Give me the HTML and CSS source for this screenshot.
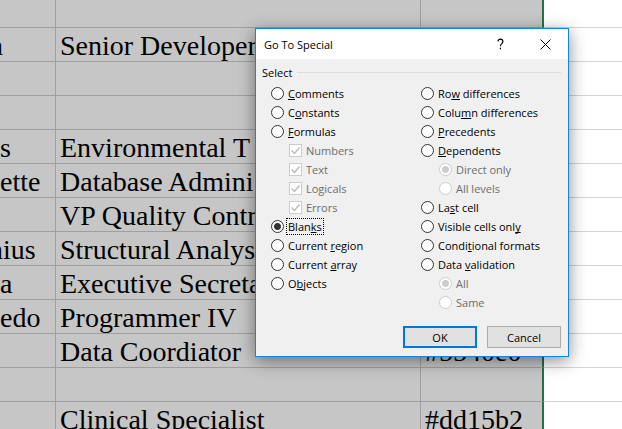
FILE: index.html
```html
<!DOCTYPE html>
<html lang="en">
<head>
  <meta charset="UTF-8" />
  <title>Go To Special</title>
  <link rel="stylesheet" href="styles.css">
</head>
<body>

<table class="sheet">
  <colgroup>
    <col class="col-name">
    <col class="col-title">
    <col class="col-color">
    <col>
  </colgroup>
  <tbody>
    <tr class="first"><td></td><td></td><td></td><td></td></tr>
    <tr><td><span class="cut">n</span></td><td>Senior Developer</td><td></td><td></td></tr>
    <tr><td></td><td></td><td></td><td></td></tr>
    <tr><td></td><td></td><td></td><td></td></tr>
    <tr><td>s</td><td>Environmental T</td><td></td><td></td></tr>
    <tr><td>ette</td><td>Database Admini</td><td></td><td></td></tr>
    <tr><td></td><td>VP Quality Contr</td><td></td><td></td></tr>
    <tr><td><span class="cut">nius</span></td><td>Structural Analys</td><td></td><td></td></tr>
    <tr><td>a</td><td>Executive Secreta</td><td></td><td></td></tr>
    <tr><td>edo</td><td>Programmer IV</td><td></td><td></td></tr>
    <tr><td></td><td>Data Coordiator</td><td>#5540e0</td><td></td></tr>
    <tr><td></td><td></td><td></td><td></td></tr>
    <tr><td></td><td>Clinical Specialist</td><td>#dd15b2</td><td></td></tr>
  </tbody>
</table>

<form class="dialog" role="dialog" aria-labelledby="dialog-title">
  <div class="titlebar">
    <h1 id="dialog-title">Go To Special</h1>
    <button type="button" class="tool" aria-label="Help">
      <svg width="11" height="13" viewBox="0 0 11 13" fill="none" stroke="#000" stroke-width="1.2"><path d="M3 3.6C3 1.9 4 1.2 5.4 1.2S7.9 2 7.9 3.5C7.9 5.6 5.4 5.7 5.4 8.2"/><path d="M5.4 9.7v1.6"/></svg>
    </button>
    <button type="button" class="tool" aria-label="Close">
      <svg width="11" height="11" viewBox="0 0 11 11" fill="none" stroke="#000" stroke-width="1"><path d="M.5.5l10 10M10.5.5l-10 10"/></svg>
    </button>
  </div>

  <div class="content">
    <fieldset>
      <legend>Select</legend>
      <div class="options">
        <div class="column">
          <label><input type="radio" name="select"><span><u>C</u>omments</span></label>
          <label><input type="radio" name="select"><span>C<u>o</u>nstants</span></label>
          <label><input type="radio" name="select"><span><u>F</u>ormulas</span></label>
          <label class="sub"><input type="checkbox" checked disabled><span>Numbers</span></label>
          <label class="sub"><input type="checkbox" checked disabled><span>Text</span></label>
          <label class="sub"><input type="checkbox" checked disabled><span>Logicals</span></label>
          <label class="sub"><input type="checkbox" checked disabled><span>Errors</span></label>
          <label><input type="radio" name="select" checked><span>Blan<u>k</u>s</span></label>
          <label><input type="radio" name="select"><span>Current <u>r</u>egion</span></label>
          <label><input type="radio" name="select"><span>Current <u>a</u>rray</span></label>
          <label><input type="radio" name="select"><span>O<u>b</u>jects</span></label>
        </div>
        <div class="column">
          <label><input type="radio" name="select"><span>Ro<u>w</u> differences</span></label>
          <label><input type="radio" name="select"><span>Colu<u>m</u>n differences</span></label>
          <label><input type="radio" name="select"><span><u>P</u>recedents</span></label>
          <label><input type="radio" name="select"><span><u>D</u>ependents</span></label>
          <label class="sub"><input type="radio" name="depth" checked disabled><span>Direct only</span></label>
          <label class="sub"><input type="radio" name="depth" disabled><span>All levels</span></label>
          <label><input type="radio" name="select"><span>La<u>s</u>t cell</span></label>
          <label><input type="radio" name="select"><span>Visible cells onl<u>y</u></span></label>
          <label><input type="radio" name="select"><span>Condi<u>t</u>ional formats</span></label>
          <label><input type="radio" name="select"><span>Data <u>v</u>alidation</span></label>
          <label class="sub"><input type="radio" name="validation" checked disabled><span>All</span></label>
          <label class="sub"><input type="radio" name="validation" disabled><span>Same</span></label>
        </div>
      </div>
    </fieldset>

    <div class="actions">
      <button type="submit" class="btn default">OK</button>
      <button type="button" class="btn">Cancel</button>
    </div>
  </div>
</form>

</body>
</html>
```
FILE: styles.css
```css
* {
  box-sizing: border-box;
}
body {
  margin: 0;
  background-color: #fff;
  overflow: hidden;
}

/* worksheet */
.sheet {
  width: 100%;
  table-layout: fixed;
  border-collapse: separate;
  border-spacing: 0;
  font-family: Georgia, "Liberation Serif", serif;
  font-size: 28px;
  line-height: 30px;
  color: #000;
}
.col-name {
  width: 56px;
}
.col-title {
  width: 365px;
}
.col-color {
  width: 123px;
}
.sheet tr {
  height: 34px;
}
.sheet .first {
  height: 28px;
}
.sheet td {
  padding: 3px 0 0 4px;
  background-color: #c6c6c6;
  border-right: 1px solid #9f9f9f;
  border-bottom: 1px solid #9f9f9f;
  white-space: nowrap;
  overflow: hidden;
}
.sheet td:first-child {
  padding-left: 0;
}
.sheet td:nth-child(3) {
  border-right: 2px solid #217346;
}
.sheet td:last-child {
  background-color: #fff;
  border-right: none;
  border-bottom-color: #d4d4d4;
}
.cut {
  margin-left: -11px;
}

/* dialog window */
.dialog {
  position: absolute;
  top: 28px;
  left: 255px;
  width: 314px;
  border: 1px solid #1883d7;
  background-color: #f0f0f0;
  box-shadow: 0 4px 16px rgba(0, 0, 0, 0.45);
  font-family: "Segoe UI", "Open Sans", sans-serif;
  font-size: 11px;
  color: #000;
}
.titlebar {
  display: flex;
  align-items: center;
  height: 30px;
  padding-left: 8px;
  background-color: #fff;
}
.titlebar h1 {
  flex: 1;
  margin: 0;
  font-size: 11px;
  font-weight: normal;
}
.tool {
  display: flex;
  align-items: center;
  justify-content: center;
  width: 45px;
  height: 30px;
  padding: 0;
  border: none;
  background: none;
}
.content {
  padding: 4px 7px 8px 6px;
}
fieldset {
  margin: 0;
  padding: 0;
  border: none;
}
legend {
  display: flex;
  align-items: center;
  gap: 5px;
  width: 100%;
  height: 18px;
  padding: 0;
}
legend::after {
  content: "";
  flex: 1;
  height: 1px;
  background-color: #dcdcdc;
}
.options {
  display: grid;
  grid-template-columns: 150px 1fr;
  padding: 3px 0 0 9px;
}
.column {
  display: flex;
  flex-direction: column;
}
label {
  display: flex;
  align-items: center;
  gap: 3px;
  height: 19px;
  line-height: 15px;
}
label span {
  padding: 0 1px;
}
label.sub {
  padding-left: 18px;
  color: #6d6d6d;
}
u {
  text-underline-offset: 1px;
  text-decoration-skip-ink: none;
}
input {
  appearance: none;
  flex: none;
  width: 13px;
  height: 13px;
  margin: 0;
  border: 1px solid #333;
  background-color: #fff;
}
input[type="radio"] {
  border-radius: 50%;
}
input[type="radio"]:checked {
  background-image: radial-gradient(circle, #333 3px, transparent 4px);
}
input:disabled {
  border-color: #ccc;
}
input[type="radio"]:checked:disabled {
  background-image: radial-gradient(circle, #ccc 3px, transparent 4px);
}
input[type="checkbox"]:checked {
  background-image: url("data:image/svg+xml,%3Csvg xmlns='http://www.w3.org/2000/svg' viewBox='0 0 11 11'%3E%3Cpath d='M1.5 5.5l3 3 5-6' fill='none' stroke='%23bbb' stroke-width='1.4'/%3E%3C/svg%3E");
}
input[name="select"]:checked + span {
  outline: 1px dotted #000;
}
.actions {
  display: flex;
  justify-content: flex-end;
  gap: 10px;
  margin-top: 14px;
}
.btn {
  width: 74px;
  height: 22px;
  padding: 0;
  border: 1px solid #adadad;
  background-color: #e1e1e1;
  font: inherit;
  color: #000;
}
.btn.default {
  border: 2px solid #0078d7;
}
```
